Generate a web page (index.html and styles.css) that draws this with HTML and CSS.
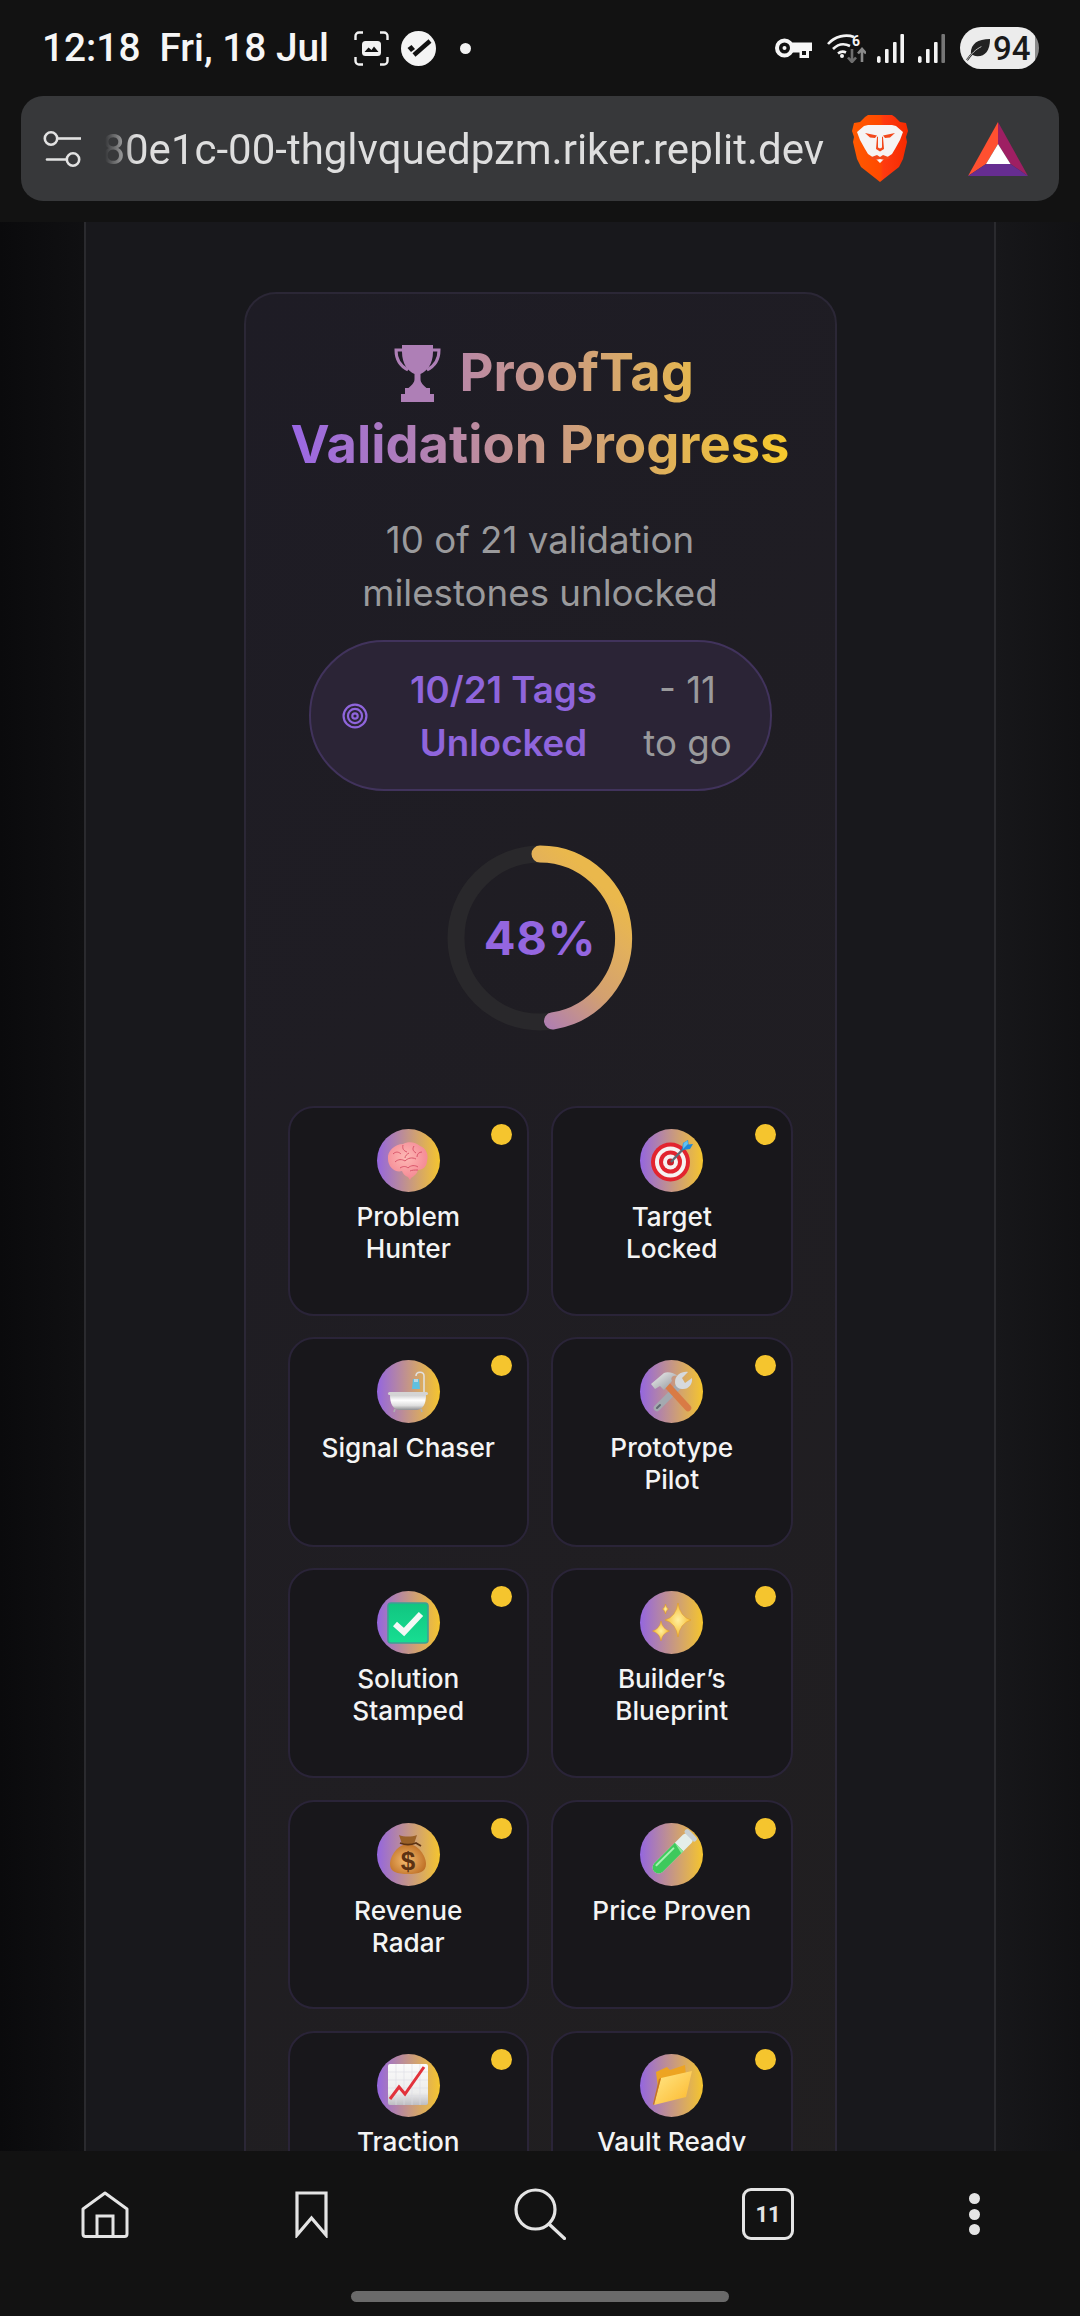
FILE: index.html
```html
<!DOCTYPE html>
<html lang="en">
<head>
<meta charset="utf-8">
<title>ProofTag Validation Progress</title>
<link rel="stylesheet" href="styles.css">
</head>
<body>
<div class="phone">
  <header class="chrome">
    <div class="status">
      <span class="time">12:18</span>
      <span class="date">Fri, 18 Jul</span>
      <svg class="st-shot" viewBox="0 0 35 35" fill="none"><path d="M1.5 9V5a3.5 3.5 0 0 1 3.5-3.5h4M26 1.5h4A3.5 3.5 0 0 1 33.500 5v4M33.500 26v4a3.500 3.500 0 0 1-3.500 3.500h-4M9 33.500H5A3.500 3.500 0 0 1 1.500 30v-4" stroke="#f2f2f2" stroke-width="2.400"/><rect x="8" y="10" width="19" height="15" rx="3.500" fill="#f2f2f2"/><path d="M10.500 21l4-4.500 3 2.500 2.500-3.500 4.500 5.500z" fill="#121212"/></svg>
      <svg class="st-check" viewBox="0 0 35 35"><circle cx="17.500" cy="17.500" r="17.500" fill="#f4f4f4"/><path d="M13 24L29 10" stroke="#121212" stroke-width="4.500"/><path d="M6.500 17l4-3 3.500 4-4 3z" fill="#121212"/></svg>
      <i class="st-dot"></i>
      <div class="st-right">
        <svg class="st-key" viewBox="0 0 37 20"><circle cx="9.500" cy="10" r="7.500" fill="none" stroke="#f6f6f6" stroke-width="4"/><circle cx="9.500" cy="10" r="2" fill="#f6f6f6"/><path d="M17 4.500h20V13h-3v7h-9.500v-5.500H17z" fill="#f6f6f6"/><path d="M27 13h4v4h-4z" fill="#121212"/></svg>
        <svg class="st-wifi" viewBox="0 0 39 30" fill="none"><path d="M1 11C8 3 19 1 27 4" stroke="#f4f4f4" stroke-width="2.600"/><path d="M6 16c5-5 11-6 17-3" stroke="#f4f4f4" stroke-width="2.600"/><path d="M11 20.500c2.500-2 5-2.500 8-1" stroke="#f4f4f4" stroke-width="2.600"/><circle cx="15" cy="23" r="2" fill="#f4f4f4"/><text x="25" y="13" class="st-six">6</text><path d="M25 16v13M21 24.500l4 4.500 4-4.500" stroke="#6e6e6e" stroke-width="2.600"/><path d="M35 29V16M31 20.500l4-4.500 4 4.500" stroke="#8a8a8a" stroke-width="2.600"/></svg>
        <svg class="st-sig" viewBox="0 0 27 29"><rect x="0" y="22" width="3.600" height="7" rx="1.800" fill="#f4f4f4"/><rect x="8" y="15" width="3.600" height="14" rx="1" fill="#f4f4f4"/><rect x="16" y="8" width="3.600" height="21" rx="1" fill="#f4f4f4"/><rect x="23.400" y="0" width="3.600" height="29" rx="1" fill="#f4f4f4"/></svg>
        <svg class="st-sig st-sig2" viewBox="0 0 27 29"><rect x="0" y="22" width="3.600" height="7" rx="1.800" fill="#f4f4f4"/><rect x="8" y="15" width="3.600" height="14" rx="1" fill="#f4f4f4"/><rect x="16" y="8" width="3.600" height="21" rx="1" fill="#f4f4f4"/><rect x="23.400" y="0" width="3.600" height="29" rx="1" fill="#767676"/></svg>
        <div class="battery">
          <svg class="leaf" viewBox="0 0 26 26" fill="none"><path d="M5 18C5 8 12 3 25 3c0 12-5 18-13 18-3 0-5-1-7-3z" fill="#222"/><path d="M1 25C6 18 10 14 16 11" stroke="#222" stroke-width="2.200"/><path d="M1 25C6 18 10 14 16 11" stroke="#ececec" stroke-width="0.800"/></svg>
          <span>94</span>
        </div>
      </div>
    </div>
    <div class="urlbar">
      <svg class="sliders" viewBox="0 0 39 36" fill="none" stroke="#e2e2e2" stroke-width="2.600"><circle cx="8" cy="7.500" r="6.200"/><path d="M14.500 7.500H38"/><circle cx="30" cy="28.500" r="6.200"/><path d="M4 28.500h19.500" stroke-linecap="round"/></svg>
      <div class="url"><span>80e1c-00-thglvquedpzm.riker.replit.dev</span></div>
      <svg class="brave" viewBox="0 0 56 67">
        <defs><linearGradient id="brv" x1="0" x2="1" y1="0" y2="0"><stop offset="0" stop-color="#ff5a00"/><stop offset=".5" stop-color="#ff4a00"/><stop offset=".56" stop-color="#ff3a10"/><stop offset="1" stop-color="#f52a00"/></linearGradient></defs>
        <path d="M13 2L16 0h24l3 2 5 5 6 1 2 8-2 6 1 5-4 17-4 8-14 11-5 4-5-4L9 52l-4-8-4-17 1-5-2-6 2-8 6-1z" fill="url(#brv)"/>
        <path d="M16 10h24l4 1 7 6-3 8-5 9-3 5-6 4-3 2-3 3-3-3-3-2-6-4-3-5-5-9-3-8 7-6z" fill="#f6f4f4"/>
        <path d="M13 18l12 2.500-2 2.500-5-.5zM43 18l-12 2.500 2 2.500 5-.5z" fill="#f2491c"/>
        <path d="M25 22l-1 12 4 2.500 4-2.500-1-12-1-.5v11l-2 1-2-1V21.500z" fill="#f2491c"/>
        <path d="M17 43l8-3 3 2 3-2 8 3-6 2-5-1-5 1z" fill="#f2491c"/>
      </svg>
      <svg class="bat" viewBox="0 0 60 54">
        <path d="M30 0L0 54l18-12 12-20z" fill="#ff5030"/>
        <path d="M30 0l30 54-17.500-12L30 22z" fill="#9e1f63"/>
        <path d="M0 54h60L42.500 42H18z" fill="#662d91"/>
        <path d="M30 22l12.500 20H18z" fill="#fff"/>
      </svg>
    </div>
  </header>

  <main class="viewport">
    <div class="column">
      <section class="panel">
        <h1 class="title">
          <svg class="trophy" viewBox="0 0 47 57"><path d="M8 0h31v7C39 19 33 26 26.500 29v5c0 4 3 6 6 9h-18c3-3 6-5 6-9v-5C14 26 8 19 8 7z" fill="#ae7fb6"/><path d="M9 5H2c0 10 4 16 12 20M38 5h7c0 10-4 16-12 20" fill="none" stroke="#ae7fb6" stroke-width="3"/><rect x="11" y="43" width="25" height="6" fill="#ae7fb6"/><rect x="7" y="49" width="33" height="8" fill="#ae7fb6"/></svg>
          ProofTag Validation Progress
        </h1>
        <p class="sub">10 of 21 validation milestones unlocked</p>
        <div class="pill">
          <svg class="bull" viewBox="0 0 25 25" fill="none" stroke="#8f65dc" stroke-width="2.100"><circle cx="12.500" cy="12.500" r="11"/><circle cx="12.500" cy="12.500" r="6.800"/><circle cx="12.500" cy="12.500" r="2.600"/></svg>
          <strong class="pill-main">10/21 Tags Unlocked</strong>
          <span class="pill-rest">- 11 to go</span>
        </div>
        <div class="ring">
          <svg viewBox="0 0 186 186">
            <defs><linearGradient id="rg" gradientUnits="userSpaceOnUse" x1="45" y1="190" x2="185" y2="40"><stop offset=".2" stop-color="#ae7db4"/><stop offset=".5" stop-color="#d3a070"/><stop offset=".75" stop-color="#e2b05c"/><stop offset=".9" stop-color="#eab84c"/></linearGradient></defs>
            <circle cx="93" cy="93" r="84" fill="none" stroke="#29282b" stroke-width="17"/>
            <path d="M93 9A84 84 0 0 1 105.500 176" fill="none" stroke="url(#rg)" stroke-width="17" stroke-linecap="round"/>
          </svg>
          <span class="ring-num">48%</span>
        </div>
        <div class="grid">

          <article class="tag"><i class="dot"></i><div class="badge">
            <svg viewBox="0 0 42 42"><defs><radialGradient id="e1" cx=".45" cy=".4" r=".7"><stop offset="0" stop-color="#fdb9b4"/><stop offset="1" stop-color="#f37e8e"/></radialGradient></defs>
            <path d="M1 19C0 11 8 4 16 4c5-3 13-2 17 2 6 2 9 9 7 15 0 5-4 9-9 9-1 4-4 6-7 8l-1 2-2-3c-3-1-5-3-6-6C8 33 1 27 1 19z" fill="url(#e1)"/>
            <path d="M6 14c3-3 6-2 8 0M16 5c-1 4 1 6 4 7M27 6c-2 3-1 5 2 7M35 12c-3 0-5 2-5 5M8 22c3-3 7-3 10-1 3-3 7-4 11-2M13 28c3-2 6-2 8 0 3-3 7-3 10-1M31 30c-3 0-6 0-8 1M22 13c-2 1-4 3-4 5" fill="none" stroke="#d9566b" stroke-width="1"/></svg>
          </div><h2 class="name">Problem Hunter</h2></article>

          <article class="tag"><i class="dot"></i><div class="badge">
            <svg viewBox="0 0 42 42"><circle cx="19.500" cy="22" r="19.500" fill="#e2242f"/><circle cx="19.500" cy="22" r="15.500" fill="#f6f2f2"/><circle cx="19.500" cy="22" r="11.500" fill="#e2242f"/><circle cx="19.500" cy="22" r="7.500" fill="#f6f2f2"/><circle cx="19.500" cy="22" r="3.500" fill="#c81e28"/><path d="M20 22L34 7" stroke="#5d6b78" stroke-width="2.400"/><path d="M31 10l1-7 5-3 .5 4.500L42 4l-3 5z" fill="#1f88d8"/><path d="M32 9l5-5-.5-3.500-4 2.500z" fill="#62c2f2"/></svg>
          </div><h2 class="name">Target Locked</h2></article>

          <article class="tag"><i class="dot"></i><div class="badge">
            <svg viewBox="0 0 42 42"><defs><linearGradient id="e3" x1="0" x2="0" y1="0" y2="1"><stop offset="0" stop-color="#cfcfd0"/><stop offset=".35" stop-color="#fff"/><stop offset=".7" stop-color="#dedede"/><stop offset="1" stop-color="#8f8f92"/></linearGradient></defs>
            <path d="M37 22V5c0-5-8-5-8 0" fill="none" stroke="#e2e2e2" stroke-width="1.500"/><path d="M26 8h6l1 10h-8z" fill="#5fc0e0"/><path d="M27 8h4v3h-4z" fill="#b8d8e4"/>
            <rect x="1" y="21" width="40" height="3" rx="1.500" fill="#d4d4d4"/><path d="M3 24h36c0 9-3 14-9 15H12C6 38 3 33 3 24z" fill="url(#e3)"/><path d="M8 38l-1 3M34 38l1 3" stroke="#b0b0b0" stroke-width="1.600"/></svg>
          </div><h2 class="name">Signal Chaser</h2></article>

          <article class="tag"><i class="dot"></i><div class="badge">
            <svg viewBox="0 0 42 42"><defs><linearGradient id="e4" x1="0" x2="1" y1="0" y2="1"><stop offset="0" stop-color="#f2f2f2"/><stop offset="1" stop-color="#8d9298"/></linearGradient></defs>
            <path d="M6 37L30 13" stroke="#a4a9b0" stroke-width="6.500" stroke-linecap="round"/><path d="M6 37l3-3" stroke="#5f6670" stroke-width="2" stroke-linecap="round"/><path d="M24 11C24 4 31 0 37 1l-6 6 3 5 7-5c1 6-4 12-10 11-4 0-7-3-7-7z" fill="#d6d9dc"/>
            <path d="M37 37L15 13" stroke="#d97b45" stroke-width="6.500" stroke-linecap="round"/><path d="M4 18L0 13 13 2c4-2 10 0 14 3-5-1-8 1-6 5l-8 9-4-4z" fill="url(#e4)"/></svg>
          </div><h2 class="name">Prototype Pilot</h2></article>

          <article class="tag"><i class="dot"></i><div class="badge">
            <svg viewBox="0 0 42 42"><defs><linearGradient id="e5" x1="0" x2="0" y1="0" y2="1"><stop offset="0" stop-color="#11c580"/><stop offset="1" stop-color="#17de92"/></linearGradient></defs><rect x="1" y="1" width="40" height="40" rx="3" fill="url(#e5)" stroke="#3f9f95" stroke-width="1.600"/><path d="M8 22l9 8L34 12" fill="none" stroke="#f4f8f6" stroke-width="6"/></svg>
          </div><h2 class="name">Solution Stamped</h2></article>

          <article class="tag"><i class="dot"></i><div class="badge">
            <svg viewBox="0 0 42 42"><defs><radialGradient id="e6" cx=".5" cy=".5" r=".55"><stop offset="0" stop-color="#fff0a0"/><stop offset="1" stop-color="#f5b62a"/></radialGradient></defs><g fill="url(#e6)" stroke="#e39a1e" stroke-width=".5"><path d="M27 1q2 14 13 17-11 3-13 17-2-14-13-17 11-3 13-17z"/><path d="M10 19q1.500 8 8.500 10-7 2-8.500 10-1.500-8-8.500-10 7-2 8.500-10z"/><path d="M14.500 2q.7 4 3 5-2.300 1-3 5-.7-4-3-5 2.300-1 3-5z"/></g></svg>
          </div><h2 class="name">Builder’s Blueprint</h2></article>

          <article class="tag"><i class="dot"></i><div class="badge">
            <svg viewBox="0 0 42 42"><defs><radialGradient id="e7" cx=".45" cy=".55" r=".6"><stop offset="0" stop-color="#f5bc70"/><stop offset="1" stop-color="#bc6c22"/></radialGradient></defs><path d="M21 11c10 0 18 12 18 20 0 8-7 10-18 10S3 39 3 31c0-8 8-20 18-20z" fill="url(#e7)"/><path d="M12 2c5 2 13 2 18 0l-3 9H15z" fill="#9a6128"/><path d="M13 10c5 2 11 2 16 0l5 3" fill="none" stroke="#5c3212" stroke-width="1.800"/><text x="21" y="37" class="emoji-dollar">$</text></svg>
          </div><h2 class="name">Revenue Radar</h2></article>

          <article class="tag"><i class="dot"></i><div class="badge">
            <svg viewBox="0 0 42 42"><g transform="rotate(45 21 21)"><rect x="15" y="-6" width="12" height="52" rx="6" fill="#e4eeea"/><path d="M15 11h12v29a6 6 0 0 1-12 0z" fill="#3ec95c"/><path d="M15 11l12 3v-3z" fill="#8ee89c"/><rect x="13.500" y="-8" width="15" height="5" rx="2" fill="#c8d0d4"/><rect x="17" y="15" width="2" height="26" rx="1" fill="#a6f0b2"/></g></svg>
          </div><h2 class="name">Price Proven</h2></article>

          <article class="tag"><i class="dot"></i><div class="badge">
            <svg viewBox="0 0 42 42"><defs><linearGradient id="e9" x1="0" x2="0" y1="0" y2="1"><stop offset="0" stop-color="#fbfbfb"/><stop offset=".7" stop-color="#ececec"/><stop offset="1" stop-color="#bdbdc2"/></linearGradient></defs><rect x="1" y="0" width="40" height="41" rx="2" fill="url(#e9)"/><path d="M1 8h40M1 16h40M1 24h40M1 32h40M9 0v41M17 0v41M25 0v41M33 0v41" stroke="#dcdce4" stroke-width=".6"/><path d="M3 35l9-12 6 7L37 3" fill="none" stroke="#e2323c" stroke-width="3"/></svg>
          </div><h2 class="name">Traction Tracker</h2></article>

          <article class="tag"><i class="dot"></i><div class="badge">
            <svg viewBox="0 0 42 42"><defs><linearGradient id="e10" x1="0" x2="1" y1="0" y2="1"><stop offset="0" stop-color="#ffe88a"/><stop offset="1" stop-color="#fdb72a"/></linearGradient></defs><path d="M5 8l11-5 3 3 15-5 1 11L9 39z" fill="#eda422"/><path d="M10 14l31-7-6 26L3 41z" fill="url(#e10)"/><path d="M3 41l7-27-2 1-6 25z" fill="#c9741c"/></svg>
          </div><h2 class="name">Vault Ready</h2></article>

        </div>
      </section>
    </div>
  </main>

  <nav class="nav">
    <div class="nav-row">
      <svg class="ic-home" viewBox="0 0 48 47" fill="none" stroke="#e4e4e4" stroke-width="3"><path d="M24 2L46 18V43a2.500 2.500 0 0 1-2.500 2.500H4.500A2.500 2.500 0 0 1 2 43V18z" stroke-linejoin="round"/><path d="M16 45V25h16v20"/></svg>
      <svg class="ic-book" viewBox="0 0 33 47" fill="none" stroke="#e4e4e4" stroke-width="3.200"><path d="M2 2h29v42L16.500 27 2 44z"/></svg>
      <svg class="ic-search" viewBox="0 0 52 52" fill="none" stroke="#e4e4e4" stroke-width="3.200"><circle cx="21.500" cy="21.500" r="19.500"/><path d="M35 36l15.500 14.500" stroke-linecap="round"/></svg>
      <div class="ic-tabs">11</div>
      <div class="ic-dots"><i></i><i></i><i></i></div>
    </div>
    <div class="home-bar"></div>
  </nav>
</div>
</body>
</html>
```
FILE: styles.css
```css
* { box-sizing: border-box; margin: 0; padding: 0; }
html, body { width: 1080px; height: 2316px; overflow: hidden; background: #121212; }
body { font-family: Inter, "Liberation Sans", sans-serif; }
.phone { width: 1080px; height: 2316px; display: flex; flex-direction: column; }

/* browser chrome */
.chrome { height: 222px; background: #121212; flex: none; color: #f6f6f6; font-family: Roboto, sans-serif; }
.status { height: 96px; display: flex; align-items: center; padding: 0 41px 0 42px; }
.time, .date { font-size: 38.800px; font-weight: 500; white-space: nowrap; padding-bottom: 2px; }
.date { margin-left: 19px; }
.st-shot { width: 35px; height: 35px; margin-left: 25px; }
.st-check { width: 35px; height: 35px; margin-left: 12px; }
.st-dot { width: 11px; height: 11px; border-radius: 50%; background: #f2f2f2; margin-left: 24px; }
.st-right { margin-left: auto; display: flex; align-items: center; }
.st-key { width: 37px; height: 20px; }
.st-wifi { width: 39px; height: 30px; margin-left: 15px; }
.st-six { font: 700 14px Roboto, sans-serif; fill: #f4f4f4; }
.st-sig { width: 27px; height: 29px; margin-left: 11px; }
.st-sig2 { margin-left: 14px; }
.battery { width: 79px; height: 42px; margin-left: 15px; border-radius: 21px; display: flex; align-items: center; gap: 2px; padding-left: 6px; background: linear-gradient(90deg, #ececec 95%, #8a8a8a 95%); color: #1a1a1a; font-size: 33px; font-weight: 500; }
.leaf { width: 25px; height: 25px; flex: none; }

.urlbar { height: 105px; margin: 0 21px; background: #37383a; border-radius: 22px; display: flex; align-items: center; padding: 0 31px 0 22px; }
.sliders { width: 39px; height: 36px; flex: none; }
.url { width: 721px; margin-left: 23px; flex: none; overflow: hidden; display: flex; justify-content: flex-end; padding-top: 2px; -webkit-mask-image: linear-gradient(90deg, transparent 0, #000 30px); mask-image: linear-gradient(90deg, transparent 0, #000 30px); }
.url span { flex: none; white-space: nowrap; font-size: 42px; line-height: 56px; color: #dedede; padding-right: 2px; }
.brave { width: 56px; height: 67px; flex: none; margin-left: 26px; }
.bat { width: 60px; height: 54px; flex: none; margin-left: 60px; }

/* page */
.viewport { flex: 1; min-height: 0; overflow: hidden; background: linear-gradient(90deg, #0a0a0c 0, #101012 84px, #17171a 996px, #111113 1080px); }
.column { width: 912px; margin: 0 auto; min-height: 100%; background: #18181c; border-left: 2px solid #2a2a2e; border-right: 2px solid #2a2a2e; padding-top: 70px; }
.panel { width: 593px; margin: 0 auto; border: 2px solid #2b2736; border-radius: 32px; background: linear-gradient(135deg, #1e1c25, #211f20); padding: 42px 42px 40px; }
.title { font-size: 52.500px; line-height: 72px; font-weight: 700; text-align: center; background: linear-gradient(90deg, #9966e6, #f7ca2a); -webkit-background-clip: text; background-clip: text; color: transparent; }
.trophy { width: 47px; height: 57px; vertical-align: -11px; margin: 0 6px 0 8px; }
.sub { margin: 33px 20px 0; font-size: 36.700px; line-height: 53px; color: #9a9a9c; text-align: center; }
.pill { width: 463px; height: 151px; margin: 21px auto 0; border: 2px solid #41335c; border-radius: 75px; background: #2b2436; display: flex; align-items: center; padding: 0 26px 0 31px; font-size: 36.700px; line-height: 53px; text-align: center; }
.bull { width: 26px; height: 26px; flex: none; }
.pill-main { width: 210px; margin-left: 31px; flex: none; font-weight: 600; color: #8f65dc; }
.pill-rest { width: 100px; margin-left: 29px; flex: none; color: #9a9a9c; }

.ring { position: relative; width: 186px; height: 186px; margin: 54px auto 0; }
.ring svg { display: block; width: 186px; height: 186px; }
.ring-num { position: absolute; inset: 0 0 2px; display: flex; align-items: center; justify-content: center; font-size: 47px; font-weight: 700; color: #9466e0; letter-spacing: .8px; }

.grid { display: grid; grid-template-columns: 241.500px 241.500px; column-gap: 22px; row-gap: 21.700px; margin-top: 75px; }
.tag { position: relative; height: 209.500px; background: #18171b; border: 2px solid #2a2438; border-radius: 26px; padding: 21px 31px 0; display: flex; flex-direction: column; align-items: center; }
.dot { position: absolute; top: 16px; right: 15px; width: 21px; height: 21px; border-radius: 50%; background: #f5c52e; }
.badge { width: 63px; height: 63px; flex: none; border-radius: 50%; background: linear-gradient(90deg, #9466e0, #f5c52e); display: flex; align-items: center; justify-content: center; }
.badge svg { width: 42px; height: 42px; overflow: visible; }
.emoji-dollar { font: 700 26px "Liberation Sans", sans-serif; fill: #5c3212; text-anchor: middle; }
.name { margin-top: 9px; font-size: 26.200px; line-height: 32px; font-weight: 450; color: #f4f4f4; text-align: center; }

/* bottom bar */
.nav { height: 165px; flex: none; background: #121212; padding-top: 37px; display: flex; flex-direction: column; align-items: center; }
.nav-row { width: 1080px; height: 52px; display: grid; grid-template-columns: 210px 203px 254px 202px 211px; align-items: center; justify-items: center; }
.ic-home { width: 48px; height: 47px; }
.ic-book { width: 33px; height: 47px; }
.ic-search { width: 52px; height: 52px; }
.ic-tabs { width: 52px; height: 52px; border: 3.200px solid #e4e4e4; border-radius: 9px; display: flex; align-items: center; justify-content: center; font: 700 22px Roboto, sans-serif; color: #e4e4e4; }
.ic-dots { display: flex; flex-direction: column; gap: 4.500px; }
.ic-dots i { width: 11px; height: 11px; border-radius: 50%; background: #e4e4e4; }
.home-bar { width: 378px; height: 11px; margin-top: 51px; border-radius: 6px; background: #6a6a6a; }
```
